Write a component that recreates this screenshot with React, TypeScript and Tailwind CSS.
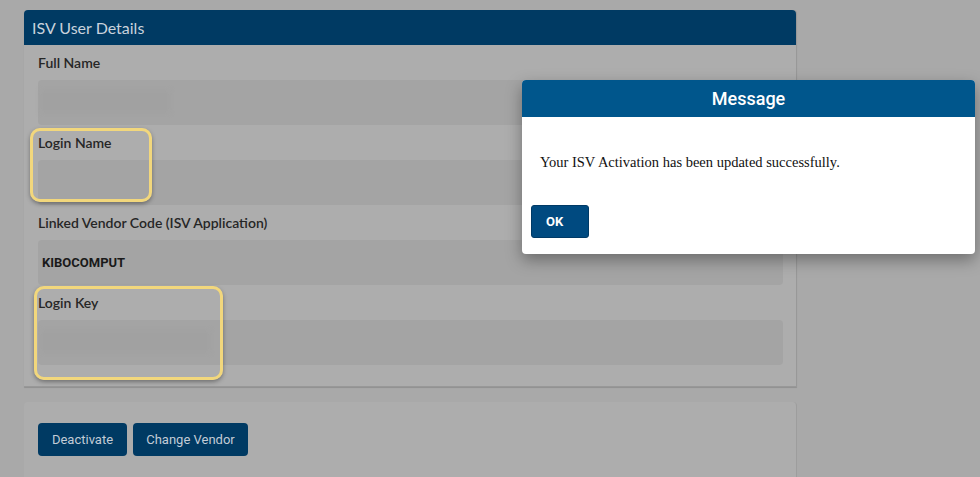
import React from "react";

const Field = ({ label, value, blur }: { label: string; value?: string; blur?: string }) => {
  return (
    <div className="pt-2">
      <div className="h-5 mb-[7px] text-[14px] leading-5 font-semibold text-[#262626]">{label}</div>
      <div className="relative h-[45px] rounded bg-[#a4a4a4] flex items-center px-[4px]">
        {blur && <div className={`absolute top-[10px] bottom-[12px] left-[2px] bg-[#a1a1a1] blur-[2px] ${blur}`} />}
        {value && <span className="text-[13px] font-bold text-[#1a1a1a] font-['Roboto',sans-serif]">{value}</span>}
      </div>
    </div>
  );
};

const App = () => {
  return (
    <div className="relative w-[980px] h-[477px] overflow-hidden bg-[#a9a9a9] font-['Lato','Noto_Sans',sans-serif]">
      <div className="pl-[24px] pt-[10px] w-[797px]">
        {/* details card */}
        <div className="rounded-t bg-[#adadad] border-r border-b border-[#989898] shadow-[0_1px_1px_rgba(0,0,0,0.15)]">
          <div className="h-[35px] rounded-t bg-[#003a63] px-2 flex items-center text-[16px] text-[#c9d2dc]">
            ISV User Details
          </div>
          <div className="pl-[14px] pr-[13px] pb-[21px]">
            <Field label="Full Name" blur="w-[130px]" />
            <Field label="Login Name" />
            <Field label="Linked Vendor Code (ISV Application)" value="KIBOCOMPUT" />
            <Field label="Login Key" blur="w-[170px]" />
          </div>
        </div>

        {/* actions card */}
        <div className="mt-[15px] h-[90px] rounded bg-[#adadad] border-r border-[#9d9d9d] pl-[14px] pt-[21px] flex gap-[6px] items-start font-['Roboto',sans-serif]">
          <button className="h-[33px] w-[89px] rounded bg-[#003a63] text-[13px] text-[#c3ccd6]">Deactivate</button>
          <button className="h-[33px] w-[115px] rounded bg-[#003a63] text-[13px] text-[#c3ccd6]">Change Vendor</button>
        </div>
      </div>

      {/* highlight annotations */}
      <div className="absolute left-[30px] top-[128px] w-[122px] h-[74px] rounded-[10px] border-[3px] border-[#f2d77c] shadow-[0_2px_4px_rgba(0,0,0,0.35)]" />
      <div className="absolute left-[34px] top-[286px] w-[189px] h-[94px] rounded-[10px] border-[3px] border-[#f2d77c] shadow-[0_2px_4px_rgba(0,0,0,0.35)]" />

      {/* message dialog */}
      <div className="absolute left-[522px] top-[80px] w-[453px] h-[174px] rounded bg-white overflow-hidden shadow-[0_6px_16px_rgba(0,0,0,0.35)]">
        <div className="h-[37px] bg-[#00568c] flex items-center justify-center text-[18px] font-medium text-white font-['Roboto',sans-serif]">
          Message
        </div>
        <div className="pl-[18px] pt-[35px] text-[14.5px] leading-5 text-[#111] font-['Liberation_Serif',serif]">
          Your ISV Activation has been updated successfully.
        </div>
        <div className="pl-[9px] pt-[33px]">
          <button className="h-[33px] w-[58px] rounded-[3px] bg-[#004a80] border border-[#003a66] text-left pl-[14px] text-[13px] font-bold text-white font-['Roboto',sans-serif]">
            OK
          </button>
        </div>
      </div>
    </div>
  );
};

export default App;
